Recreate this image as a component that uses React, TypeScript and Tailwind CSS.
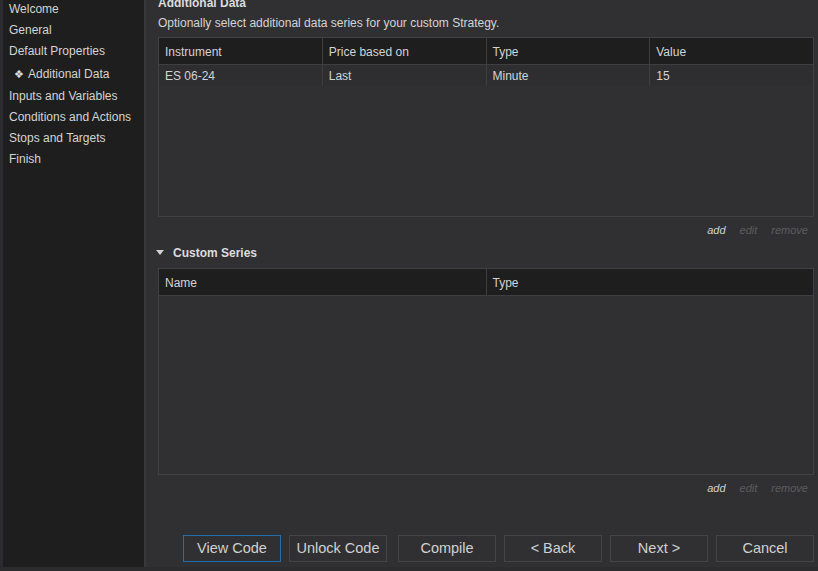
import type { ReactNode } from 'react';

const steps = [
  'Welcome',
  'General',
  'Default Properties',
  'Additional Data',
  'Inputs and Variables',
  'Conditions and Actions',
  'Stops and Targets',
  'Finish',
];

function Actions() {
  return (
    <div className="flex h-[27px] items-center justify-end gap-[14px] pr-[6px] text-[11px] italic">
      <span className="text-[#d2d2d2]">add</span>
      <span className="text-[#5c5c5e]">edit</span>
      <span className="text-[#5c5c5e]">remove</span>
    </div>
  );
}

function HeaderCell({ children, last }: { children: ReactNode; last?: boolean }) {
  return (
    <div
      className={`flex-1 pl-[6px] pt-[2px] leading-[24px] ${last ? '' : 'border-r border-[#3e3e40]'}`}
    >
      {children}
    </div>
  );
}

function Cell({ children, last }: { children: ReactNode; last?: boolean }) {
  return (
    <div
      className={`flex-1 pl-[6px] pt-[1px] leading-[20px] ${last ? '' : 'border-r border-[#3e3e40]'}`}
    >
      {children}
    </div>
  );
}

export default function App() {
  return (
    <div
      className="flex h-[571px] w-[818px] overflow-hidden bg-[#2c2c2f] pb-[4px] pl-[3px] text-[12px] text-[#d4d4d4]"
      style={{ fontFamily: '"Liberation Sans", Arial, sans-serif' }}
    >
      <aside className="flex w-[141px] flex-col bg-[#1e1e1e] pl-[6px]">
        <div className="-mt-[2px] flex flex-col">
          {steps.map((s) =>
            s === 'Additional Data' ? (
              <div key={s} className="flex h-[24px] items-center whitespace-nowrap pl-[5px] pt-[2px]">
                <span className="mr-[4px] text-[11px] leading-none text-[#e0e0e0]">❖</span>
                {s}
              </div>
            ) : (
              <div key={s} className="flex h-[21px] items-center whitespace-nowrap">
                {s}
              </div>
            ),
          )}
        </div>
      </aside>
      <div className="w-[2px] bg-[#38383a]" />
      <main className="flex flex-1 flex-col bg-[#303033] pl-[12px] pr-[4px]">
        <div className="-mt-[4px] font-bold leading-[14px] text-[#dcdcdc]">Additional Data</div>
        <div className="mt-[6px] leading-[14px]">
          Optionally select additional data series for your custom Strategy.
        </div>
        <div className="mt-[7px] flex h-[180px] flex-col border border-[#414143]">
          <div className="flex border-b border-[#3e3e40] bg-[#1e1e1e]">
            <HeaderCell>Instrument</HeaderCell>
            <HeaderCell>Price based on</HeaderCell>
            <HeaderCell>Type</HeaderCell>
            <HeaderCell last>Value</HeaderCell>
          </div>
          <div className="flex bg-[#2e2e30]">
            <Cell>ES 06-24</Cell>
            <Cell>Last</Cell>
            <Cell>Minute</Cell>
            <Cell last>15</Cell>
          </div>
        </div>
        <Actions />
        <div className="mt-[1px] flex h-[16px] items-center font-bold text-[#dcdcdc]">
          <svg width="8" height="6" viewBox="0 0 8 6" className="-ml-[2px] mr-[9px]">
            <polygon points="0,0 8,0 4,5" fill="#d0d0d0" />
          </svg>
          Custom Series
        </div>
        <div className="mt-[7px] flex h-[207px] flex-col border border-[#414143]">
          <div className="flex border-b border-[#3e3e40] bg-[#1e1e1e]">
            <HeaderCell>Name</HeaderCell>
            <HeaderCell last>Type</HeaderCell>
          </div>
        </div>
        <Actions />
        <div className="mt-[33px] flex justify-end gap-[8px] text-[14.5px] text-[#d0d0d0]">
          {['View Code', 'Unlock Code', 'Compile', '< Back', 'Next >', 'Cancel'].map((b, i) => (
            <button
              key={b}
              className={`h-[27px] w-[98px] border bg-[#303033] ${i === 0 ? 'border-[#1f6fb0]' : 'border-[#454547]'} ${i === 2 ? 'ml-[3px]' : ''}`}
            >
              {b}
            </button>
          ))}
        </div>
      </main>
    </div>
  );
}
